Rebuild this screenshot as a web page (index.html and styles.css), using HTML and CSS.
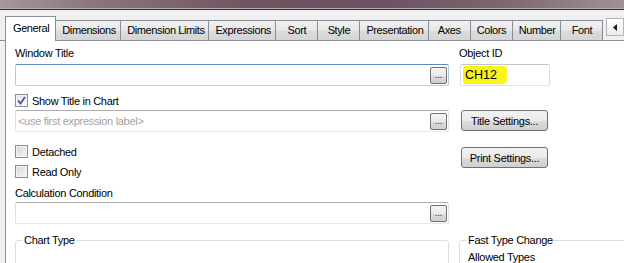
FILE: index.html
```html
<!DOCTYPE html>
<html lang="en">
<head>
  <meta charset="UTF-8" />
  <title>Chart Properties</title>
  <link rel="stylesheet" href="styles.css">
</head>
<body>
  <div class="titlebar"></div>

  <div class="tabstrip">
    <div class="tab active">General</div>
    <div class="tab">Dimensions</div>
    <div class="tab">Dimension Limits</div>
    <div class="tab">Expressions</div>
    <div class="tab">Sort</div>
    <div class="tab">Style</div>
    <div class="tab">Presentation</div>
    <div class="tab">Axes</div>
    <div class="tab">Colors</div>
    <div class="tab">Number</div>
    <div class="tab">Font</div>
    <div class="tab-scroll">
      <svg width="5" height="7" viewBox="0 0 5 7"><path d="M4 0 L0 3.5 L4 7 Z" fill="#1a1a1a"/></svg>
    </div>
  </div>

  <div class="panel">
    <div class="col-left">
      <div class="label">Window Title</div>
      <div class="field focused">
        <span class="field-text"></span>
        <button class="dots">...</button>
      </div>

      <div class="check-row row-show">
        <span class="check checked">
          <svg width="9" height="9" viewBox="0 0 9 9"><path d="M1 4.5 L3.5 7.5 L8 1" fill="none" stroke="#3b5a9a" stroke-width="1.8"/></svg>
        </span>
        Show Title in Chart
      </div>
      <div class="field field-2">
        <span class="field-text hint">&lt;use first expression label&gt;</span>
        <button class="dots">...</button>
      </div>

      <div class="check-row row-detached"><span class="check"></span>Detached</div>
      <div class="check-row row-readonly"><span class="check"></span>Read Only</div>

      <div class="label label-calc">Calculation Condition</div>
      <div class="field field-3">
        <span class="field-text"></span>
        <button class="dots">...</button>
      </div>

      <fieldset class="group">
        <legend>Chart Type</legend>
      </fieldset>
    </div>

    <div class="col-right">
      <div class="label">Object ID</div>
      <div class="field objid">
        <span class="marker">CH12</span>
      </div>
      <button class="btn btn-title">Title Settings...</button>
      <button class="btn btn-print">Print Settings...</button>

      <fieldset class="group group-fast">
        <legend>Fast Type Change</legend>
        <div class="allowed">Allowed Types</div>
      </fieldset>
    </div>
  </div>
</body>
</html>
```

FILE: styles.css
```css
body {
  margin: 0;
  width: 624px;
  height: 263px;
  overflow: hidden;
  background: #f0f0f0;
  font-family: "Liberation Sans", Arial, sans-serif;
  font-size: 11px;
  letter-spacing: -0.3px;
  color: #000;
}

/* window caption, cut off at the top */
.titlebar {
  height: 8px;
  background: linear-gradient(90deg, #a4979e 0%, #8a7680 15%, #6d5562 40%, #6a5260 60%, #7a6570 80%, #9f9198 100%);
  border-bottom: 1px solid #b9aab2;
  box-shadow: 0 1px 0 #3a2b33;
  margin-bottom: 1px;
}

.tabstrip {
  display: flex;
  align-items: flex-end;
  height: 30px;
  padding-left: 5px;
  border-bottom: 1px solid #898c95;
}

.tab {
  min-width: 29px;
  height: 19px;
  line-height: 19px;
  padding: 0 6px;
  border: 1px solid #898c95;
  border-bottom: none;
  border-left: none;
  background: linear-gradient(#f3f3f3, #e6e6e6 50%, #dcdcdc 51%, #d4d4d4);
  white-space: nowrap;
  text-align: center;
  letter-spacing: -0.4px;
}

.tab.active {
  height: 24px;
  line-height: 22px;
  margin-bottom: -1px;
  border-left: 1px solid #898c95;
  background: #fff;
  padding: 0 7px;
  position: relative;
  z-index: 1;
}

.tab-scroll {
  margin-left: 3px;
  align-self: flex-start;
  margin-top: 8px;
  width: 16px;
  height: 16px;
  border: 1px solid #b5b5b5;
  background: linear-gradient(#ffffff, #ececec);
  display: flex;
  align-items: center;
  justify-content: center;
}

.panel {
  display: flex;
  gap: 10px;
  background: #fff;
  border-left: 1px solid #898c95;
  margin-left: 5px;
  padding-left: 9px;
  height: 240px;
  overflow: hidden;
}

.col-left {
  width: 434px;
  flex-shrink: 0;
  display: flex;
  flex-direction: column;
}

.col-right {
  flex: 1;
  display: flex;
  flex-direction: column;
}

.col-left > *,
.col-right > * {
  flex-shrink: 0;
}

.label {
  margin-top: 6px;
  height: 13px;
  line-height: 13px;
}

.field {
  margin-top: 4px;
  height: 20px;
  border: 1px solid;
  border-color: #abadb3 #e2e3ea #e3e9ef #dbdfe6;
  border-radius: 2px;
  display: flex;
  align-items: center;
  background: #fff;
}

.field.focused {
  border-color: #5d8ab8 #aecbe6 #b7d3ec #aecbe6;
}

.field-text {
  flex: 1;
  padding-left: 2px;
}

.hint {
  color: #a3a3a3;
}

.dots {
  width: 17px;
  height: 17px;
  margin-right: 1px;
  padding: 0 0 3px;
  border: 1px solid #707070;
  border-radius: 2px;
  background: linear-gradient(#f4f4f4, #e9e9e9 50%, #dcdcdc 51%, #d0d0d0);
  font-family: "Liberation Sans", Arial, sans-serif;
  font-size: 9px;
  line-height: 9px;
  display: flex;
  align-items: flex-end;
  justify-content: center;
}

.check-row {
  display: flex;
  align-items: center;
  gap: 4px;
  height: 15px;
}

.row-show { margin-top: 7px; }
.field-2 { margin-top: 2px; }
.row-detached { margin-top: 12px; }
.row-readonly { margin-top: 5px; }
.label-calc { margin-top: 8px; }
.field-3 { margin-top: 2px; }

.check {
  width: 11px;
  height: 11px;
  border: 1px solid #8e8f8f;
  background: linear-gradient(135deg, #d6d6d6, #f6f6f6);
  box-shadow: inset 0 0 0 1px #f4f4f4;
  display: flex;
  align-items: center;
  justify-content: center;
}

.check.checked {
  background: linear-gradient(135deg, #e4e4e4, #fafafa);
}

.group {
  margin: 10px 0 0;
  padding: 4px 8px;
  height: 60px;
  border: 1px solid #d5dfe5;
  border-radius: 3px;
}

.group legend {
  padding: 0 1px;
  margin-left: -1px;
}

.group-fast {
  margin-right: -20px;
  padding-top: 2px;
}

.allowed {
  margin-top: 3px;
}

.objid {
  width: 88px;
  margin-left: 1px;
  border-color: #c5c5c5 #dcdcdc #e3e3e3 #dcdcdc;
}

.marker {
  margin-left: 2px;
  padding: 0 10px 0 2px;
  height: 18px;
  line-height: 18px;
  font-size: 12.5px;
  letter-spacing: 0;
  background: #f9f51a;
  border-radius: 2px 4px 5px 2px;
}

.btn {
  width: 87px;
  height: 21px;
  margin-left: 2px;
  padding: 0;
  border: 1px solid #707070;
  border-radius: 3px;
  background: linear-gradient(#f2f2f2, #ebebeb 50%, #dddddd 51%, #cfcfcf);
  font-family: "Liberation Sans", Arial, sans-serif;
  font-size: 11px;
  letter-spacing: -0.3px;
  color: #000;
}

.btn-title { margin-top: 24px; }
.btn-print { margin-top: 16px; }
.col-right .group { margin-top: 66px; }
```
